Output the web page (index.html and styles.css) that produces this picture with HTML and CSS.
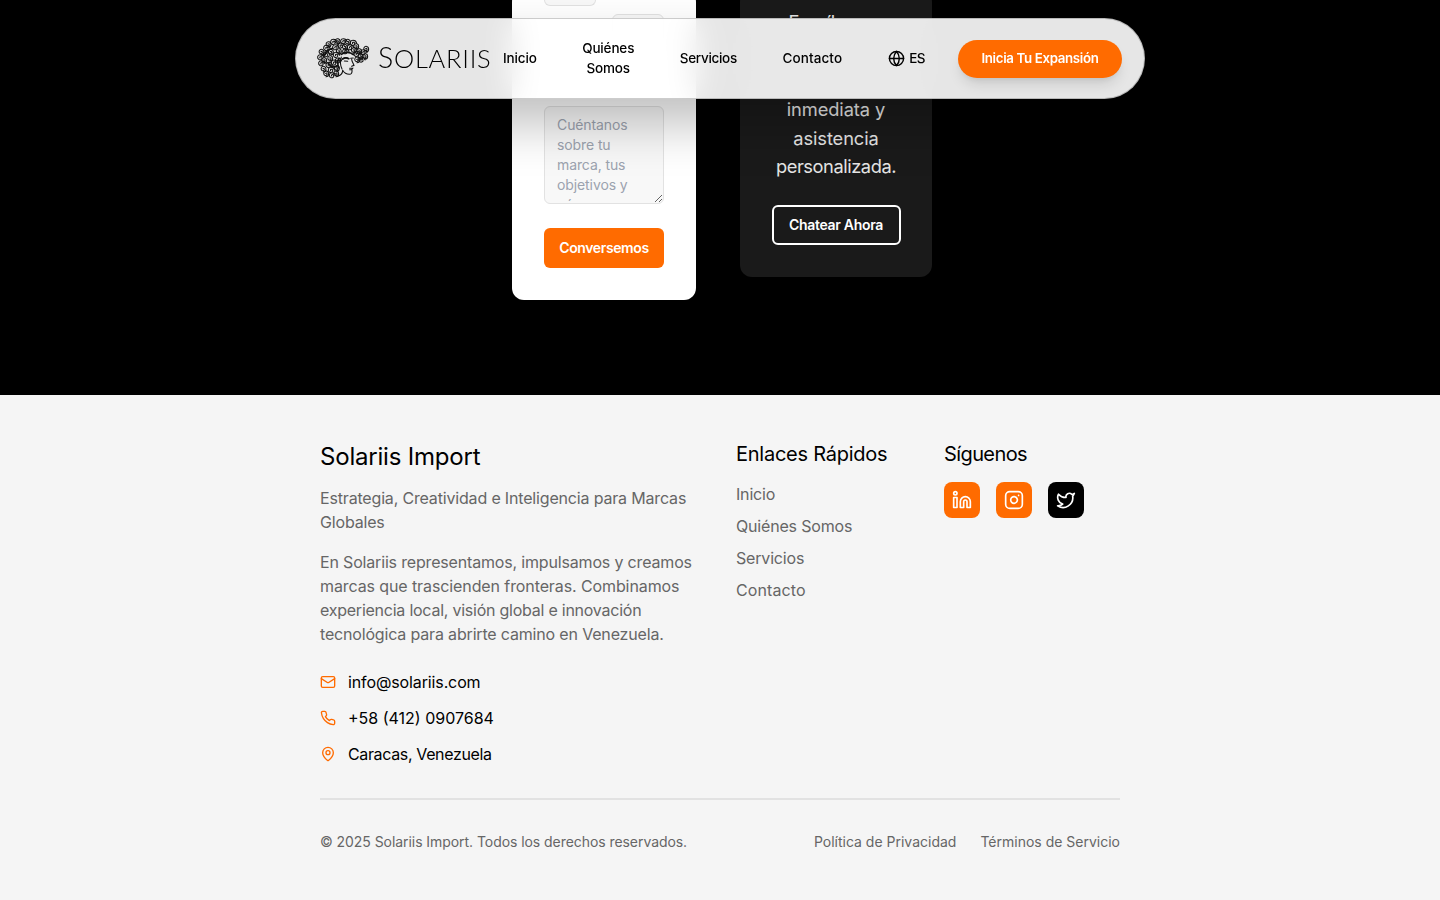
FILE: index.html
```html
<!DOCTYPE html>
<html lang="es">
<head>
<meta charset="utf-8">
<title>Solariis Import</title>
<link rel="stylesheet" href="styles.css">
</head>
<body>
<header class="nav">
  <a class="brand">
    <svg class="head" viewBox="0 0 180 144" fill="none" stroke="#111" stroke-width="3.2" stroke-linecap="round">
      <defs>
        <path id="c" d="M1 1c-3-4 4-6 6-2 2 6-5 9-10 6-6-5-3-14 5-14 6 0 10 4 11 9"/>
        <path id="d" d="M-1 0c4-3 6 3 2 6-6 2-9-4-7-9 4-7 14-4 14 4 0 6-4 9-8 9"/>
      </defs>
      <use href="#c" x="52" y="122"/><use href="#d" x="66" y="115"/><use href="#d" x="36" y="115"/><use href="#c" x="49" y="106"/>
      <use href="#d" x="28" y="101"/><use href="#d" x="68" y="99"/><use href="#c" x="42" y="91"/><use href="#c" x="20" y="86"/>
      <use href="#c" x="58" y="84"/><use href="#d" x="30" y="75"/><use href="#c" x="17" y="68"/><use href="#d" x="48" y="69"/>
      <use href="#c" x="70" y="78"/><use href="#c" x="34" y="59"/><use href="#d" x="22" y="50"/><use href="#c" x="64" y="61"/>
      <use href="#d" x="50" y="50"/><use href="#c" x="35" y="40"/><use href="#d" x="43" y="27"/><use href="#c" x="62" y="38"/>
      <use href="#c" x="56" y="22"/><use href="#d" x="74" y="48"/><use href="#d" x="70" y="18"/><use href="#c" x="78" y="33"/>
      <use href="#c" x="86" y="20"/><use href="#d" x="92" y="35"/><use href="#d" x="101" y="20"/><use href="#c" x="106" y="38"/>
      <use href="#c" x="115" y="25"/><use href="#d" x="126" y="33"/><use href="#d" x="119" y="45"/><use href="#c" x="92" y="50"/>
      <use href="#c" x="126" y="58"/><use href="#d" x="135" y="48"/><use href="#d" x="139" y="63"/><use href="#c" x="146" y="53"/>
      <use href="#d" x="156" y="41"/><use href="#c" x="140" y="75"/><use href="#d" x="153" y="63"/><use href="#d" x="129" y="73"/>
      <path d="M86 71c8-4 14-3 19 0M110 70l8-1M113 73c1 8 5 12 7 18l-7 3M107 100h9l-3 4h-6M114 105c1 8-2 13-8 13-9 0-16-5-20-12M91 78l10 1M82 66c-4 12-3 26 2 36M70 124c10-2 16-10 16-18"/>
      <path stroke-width="5" d="M82 58c10-8 26-8 36 1M86 72c6-4 12-4 18-1M75 70c-5 9-5 19 0 29M42 84c8 12 18 14 28 8M30 62c5-12 14-20 26-22"/>
    </svg>
    <span class="wordmark"><b>S</b>OLARIIS</span>
  </a>
  <nav class="links">
    <a>Inicio</a>
    <a>Quiénes<br>Somos</a>
    <a class="serv">Servicios</a>
    <a class="cont">Contacto</a>
  </nav>
  <button class="lang">
    <svg viewBox="0 0 24 24" class="line"><circle cx="12" cy="12" r="10"/><path d="M12 2a14.5 14.5 0 0 0 0 20 14.5 14.5 0 0 0 0-20M2 12h20"/></svg>
    <span>ES</span>
  </button>
  <a class="cta"><span>Inicia Tu Expansión</span></a>
</header>

<main class="contact">
  <section class="card form">
    <div class="field in-a"></div>
    <div class="field in-b"></div>
    <textarea class="field area" placeholder="Cuéntanos sobre tu marca, tus objetivos y cómo podemos ayudarte"></textarea>
    <button class="send"><span>Conversemos</span></button>
  </section>
  <section class="card chat">
    <p class="lead">Escríbenos</p>
    <p>inmediata y<br>asistencia<br><span class="pers">personalizada.</span></p>
    <a class="chat-btn"><span>Chatear Ahora</span></a>
  </section>
</main>

<footer class="footer">
  <div class="inner">
    <div class="cols">
      <div class="about">
        <h3>Solariis Import</h3>
        <p class="tag">Estrategia, Creatividad e Inteligencia para Marcas<br>Globales</p>
        <p class="desc">En Solariis representamos, impulsamos y creamos<br><span class="l2">marcas que trascienden fronteras. Combinamos</span><br><span class="l3">experiencia local, visión global e innovación</span><br>tecnológica para abrirte camino en Venezuela.</p>
        <ul class="info">
          <li><svg viewBox="0 0 24 24" class="line"><rect x="2" y="4" width="20" height="16" rx="2"/><path d="m22 7-8.97 5.7a1.94 1.94 0 0 1-2.06 0L2 7"/></svg><span class="mail">info@solariis.com</span></li>
          <li><svg viewBox="0 0 24 24" class="line"><path d="M22 16.92v3a2 2 0 0 1-2.18 2 19.79 19.79 0 0 1-8.63-3.07 19.5 19.5 0 0 1-6-6 19.79 19.79 0 0 1-3.07-8.67A2 2 0 0 1 4.11 2h3a2 2 0 0 1 2 1.72c.127.96.361 1.903.7 2.81a2 2 0 0 1-.45 2.11L8.09 9.91a16 16 0 0 0 6 6l1.27-1.27a2 2 0 0 1 2.11-.45c.907.339 1.85.573 2.81.7A2 2 0 0 1 22 16.92z"/></svg><span>+58 (412) 0907684</span></li>
          <li><svg viewBox="0 0 24 24" class="line"><path d="M20 10c0 4.993-5.539 10.193-7.399 11.799a1 1 0 0 1-1.202 0C9.539 20.193 4 14.993 4 10a8 8 0 0 1 16 0"/><circle cx="12" cy="10" r="3"/></svg><span class="place">Caracas, Venezuela</span></li>
        </ul>
      </div>
      <div>
        <h4>Enlaces Rápidos</h4>
        <ul class="quick">
          <li>Inicio</li><li>Quiénes Somos</li><li>Servicios</li><li class="qc">Contacto</li>
        </ul>
      </div>
      <div>
        <h4 class="follow">Síguenos</h4>
        <div class="social">
          <a><svg viewBox="0 0 24 24" class="line"><path d="M16 8a6 6 0 0 1 6 6v7h-4v-7a2 2 0 0 0-4 0v7h-4v-7a6 6 0 0 1 6-6z"/><rect x="2" y="9" width="4" height="12"/><circle cx="4" cy="4" r="2"/></svg></a>
          <a><svg viewBox="0 0 24 24" class="line"><rect x="2" y="2" width="20" height="20" rx="5"/><path d="M16 11.37A4 4 0 1 1 12.63 8 4 4 0 0 1 16 11.37zM17.5 6.5h.01"/></svg></a>
          <a class="dark"><svg viewBox="0 0 24 24" class="line"><path d="M22 4s-.7 2.1-2 3.4c1.6 10-9.4 17.3-18 11.6 2.2.1 4.4-.6 6-2C3 15.5.5 9.6 3 5c2.2 2.6 5.6 4.1 9 4-.9-4.2 4-6.6 7-3.8 1.1 0 3-1.2 3-1.2z"/></svg></a>
        </div>
      </div>
    </div>
    <div class="legal">
      <span class="copy">© 2025 Solariis Import. Todos los derechos reservados.</span>
      <span class="terms"><a>Política de Privacidad</a><a>Términos de Servicio</a></span>
    </div>
  </div>
</footer>
</body>
</html>
```
FILE: styles.css
```css
* { box-sizing: border-box; margin: 0; padding: 0; }
body { width: 1440px; height: 900px; overflow: hidden; background: #f5f5f5; color: #000; font-family: Inter, "Open Sans", sans-serif; font-size: 16px; line-height: 24px; }
ul { list-style: none; }
button { font: inherit; border: 0; background: none; }
a, span, p, h3, h4, li { white-space: nowrap; }
.line { fill: none; stroke: currentColor; stroke-width: 2; stroke-linecap: round; stroke-linejoin: round; flex: none; }

.nav { position: fixed; z-index: 5; top: 18px; left: 295px; width: 850px; height: 81px; border-radius: 41px; border: 1px solid rgba(0,0,0,.2); background: rgba(255,255,255,.9); backdrop-filter: blur(16px); box-shadow: 0 25px 50px rgba(0,0,0,.25); display: flex; align-items: center; padding: 0 22px 0 18px; font-size: 13.5px; line-height: 20px; font-weight: 450; }
.brand { display: flex; align-items: center; width: 189px; }
.head { width: 60px; height: 48px; flex: none; }
.wordmark { font-family: Lato, sans-serif; font-weight: 300; font-size: 25.5px; line-height: 30px; letter-spacing: .75px; margin: -2px 0 0 4px; }
.wordmark b { font-weight: 300; font-size: 28.5px; }
.links { display: flex; align-items: center; text-align: center; gap: 45.5px; letter-spacing: -.15px; margin-top: -2px; }
.serv { letter-spacing: -.3px; }
.cont { letter-spacing: .1px; }
.lang { display: flex; align-items: center; gap: 4px; margin-left: 46px; width: 37px; letter-spacing: -.5px; }
.lang svg { width: 17px; height: 17px; }
.lang span { margin-top: -1px; }
.cta { margin-left: auto; width: 164px; height: 38px; border-radius: 19px; background: #ff6b00; color: #fff; font-weight: 600; font-size: 13.3px; letter-spacing: -.35px; display: flex; align-items: center; justify-content: center; box-shadow: 0 9px 14px -3px rgba(0,0,0,.12), 0 4px 6px -4px rgba(0,0,0,.1); }
.cta span { margin-top: -1px; }

.contact { height: 395px; background: #000; overflow: hidden; display: flex; align-items: flex-start; padding-left: 512px; gap: 44px; }
.card { border-radius: 12px; }
.form { width: 184px; height: 310px; margin-top: -10px; background: #fff; padding: 0 32px; display: flex; flex-direction: column; }
.field { background: #f8f8f8; border: 1px solid #e2e2e2; border-radius: 6px; flex: none; }
.in-a { width: 52px; height: 16px; border-top: 0; border-radius: 0 0 6px 6px; }
.in-b { width: 52px; height: 40px; margin-top: 8px; align-self: flex-end; }
.area { width: 120px; height: 98px; margin-top: 52px; padding: 8px 12px; font: 400 14px/20px Inter, sans-serif; letter-spacing: -.1px; overflow: hidden; resize: vertical; }
.area::placeholder { color: #9ca3af; height: 87px; overflow: hidden; }
.send { height: 40px; margin-top: 24px; border-radius: 6px; background: #ff6b00; color: #fff; font-weight: 600; font-size: 14px; letter-spacing: -.4px; }
.chat { width: 192px; height: 287px; margin-top: -10px; background: #1a1a1a; display: flex; flex-direction: column; align-items: center; text-align: center; padding-top: 18px; }
.chat p { color: #e5e5e5; font-size: 18.3px; line-height: 28.5px; letter-spacing: -.1px; }
.chat .lead { height: 11px; overflow: hidden; margin-bottom: 76px; }
.chat .pers { letter-spacing: -.45px; }
.chat-btn { margin-top: 24.5px; width: 129px; height: 40px; flex: none; border: 2px solid #fff; border-radius: 6px; color: #fff; font-size: 14px; font-weight: 600; letter-spacing: -.3px; display: flex; align-items: center; justify-content: center; }

.footer { height: 505px; padding-top: 48px; }
.inner { width: 800px; margin: 0 auto; }
.cols { display: grid; grid-template-columns: 384px 176px 176px; column-gap: 32px; height: 355px; }
h3 { font-size: 24px; line-height: 28px; font-weight: 400; letter-spacing: -.2px; }
h4 { font-size: 20px; line-height: 23px; font-weight: 400; letter-spacing: -.25px; }
.follow { letter-spacing: -.6px; }
.about p, .quick, .legal { color: #666; }
.tag { margin-top: 15px; letter-spacing: -.17px; }
.desc { margin-top: 16px; letter-spacing: -.17px; }
.l2 { letter-spacing: -.1px; }
.l3 { letter-spacing: -.24px; }
.info { margin-top: 24px; display: grid; gap: 12px; }
.info li { display: flex; align-items: center; gap: 12px; }
.info svg { width: 16px; height: 16px; color: #ff6b00; }
.mail { letter-spacing: -.12px; }
.place { letter-spacing: -.36px; }
.quick { margin-top: 16px; display: grid; gap: 8px; letter-spacing: -.18px; }
.qc { letter-spacing: .1px; }
.social { display: flex; gap: 16px; margin-top: 16px; }
.social a { width: 36px; height: 36px; border-radius: 8px; background: #ff6b00; color: #fff; display: flex; align-items: center; justify-content: center; }
.social .dark { background: #000; }
.social svg { width: 20px; height: 20px; }
.legal { border-top: 2px solid #e2e2e2; padding-top: 32px; display: flex; justify-content: space-between; font-size: 14px; line-height: 20px; }
.copy { letter-spacing: -.06px; }
.terms { display: flex; gap: 24px; }
```
